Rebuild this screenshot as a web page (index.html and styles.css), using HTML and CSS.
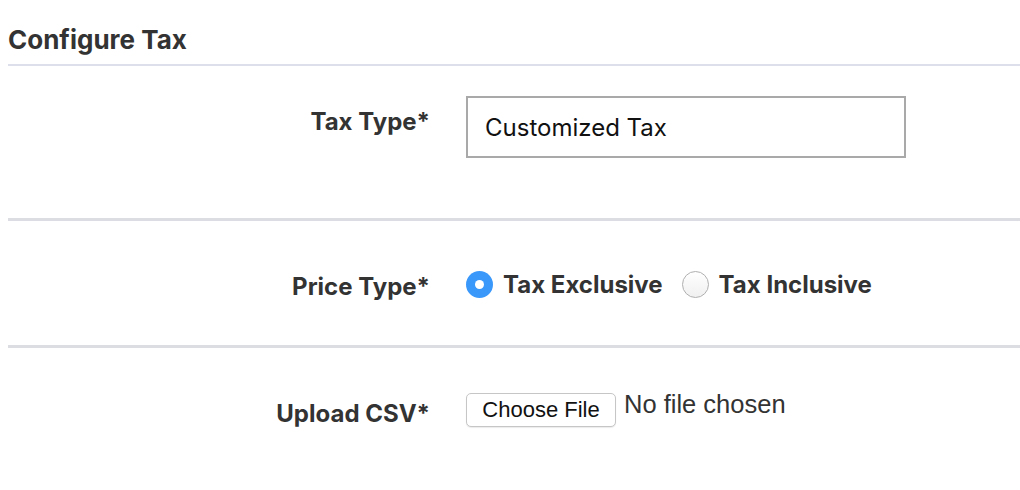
FILE: index.html
```html
<!DOCTYPE html>
<html>
<head>
<meta charset="utf-8">
<link rel="stylesheet" href="styles.css">
</head>
<body>
<div class="page">
  <h2 class="title">Configure Tax</h2>
  <div class="row row-type">
    <div class="label">Tax Type*</div>
    <div class="control">
      <div class="text-input">Customized Tax</div>
    </div>
  </div>
  <div class="row row-price">
    <div class="label">Price Type*</div>
    <div class="control radios">
      <label class="radio-opt"><span class="radio checked"></span><span class="radio-text">Tax Exclusive</span></label>
      <label class="radio-opt"><span class="radio"></span><span class="radio-text">Tax Inclusive</span></label>
    </div>
  </div>
  <div class="row row-upload">
    <div class="label">Upload CSV*</div>
    <div class="control file">
      <button class="file-btn" type="button">Choose File</button>
      <span class="file-status">No file chosen</span>
    </div>
  </div>
</div>
</body>
</html>
```
FILE: styles.css
```css
* { box-sizing: border-box; }
html, body { margin: 0; padding: 0; background: #fff; }
body {
  font-family: Inter, "Noto Sans", sans-serif;
  color: #333;
  width: 1020px;
  height: 490px;
  overflow: hidden;
}
.page { padding-left: 8px; }
.title {
  margin: 0;
  padding-top: 24px;
  height: 66px;
  font-size: 26px;
  font-weight: 700;
  line-height: 32px;
  color: #333;
  border-bottom: 2px solid #dde0ea;
}
.row {
  display: grid;
  grid-template-columns: 422px 1fr;
  column-gap: 36px;
}
.label {
  text-align: right;
  font-size: 24px;
  font-weight: 700;
  color: #333;
  line-height: 28px;
}
.row-type {
  padding-top: 30px;
  height: 155px;
  border-bottom: 3px solid #dcdde3;
}
.row-type .label { padding-top: 12px; }
.text-input {
  width: 440px;
  height: 62px;
  border: 2px solid #a9a9a9;
  padding: 0 17px;
  display: flex;
  align-items: center;
  font-size: 24px;
  color: #111;
  font-weight: 400;
}
.row-price {
  padding-top: 48px;
  height: 127px;
  border-bottom: 3px solid #dcdde3;
}
.row-price .label { padding-top: 4px; }
.radios { display: flex; align-items: center; height: 30px; }
.radio-opt { display: flex; align-items: center; margin-right: 19px; }
.radio {
  width: 27px;
  height: 27px;
  border-radius: 50%;
  border: 1px solid #b0b0b0;
  background: linear-gradient(#fff, #f0f0f0);
  display: flex;
  align-items: center;
  justify-content: center;
  flex: none;
}
.radio.checked {
  border: none;
  background: #3a98fb;
}
.radio.checked::after {
  content: "";
  width: 9px;
  height: 9px;
  border-radius: 50%;
  background: #fff;
}
.radio-text {
  margin-left: 10px;
  font-size: 24px;
  font-weight: 700;
  color: #333;
}
.row-upload { padding-top: 45px; }
.row-upload .label { padding-top: 7px; }
.file { display: flex; align-items: flex-start; }
.file-btn {
  margin: 0;
  height: 34px;
  width: 150px;
  padding: 0;
  border: 1px solid #c6c6c6;
  border-radius: 5px;
  background: #fff;
  font-family: "Liberation Sans", Arial, sans-serif;
  font-size: 22px;
  color: #111;
  box-shadow: 0 1px 1px rgba(0,0,0,0.08);
}
.file-status {
  margin-left: 8px;
  font-family: "Liberation Sans", Arial, sans-serif;
  font-size: 25.5px;
  color: #333;
  line-height: 28px;
  margin-top: -3px;
}
```
